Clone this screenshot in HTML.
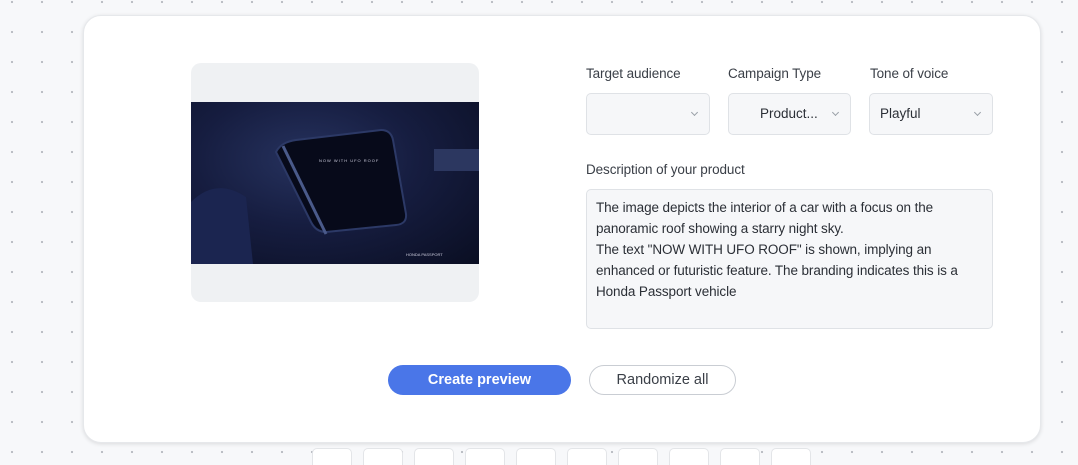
<!DOCTYPE html>
<html><head><style>
*{box-sizing:border-box;margin:0;padding:0}
html,body{width:1078px;height:465px;overflow:hidden}
body{background-color:#f7f8fa;background-image:radial-gradient(circle,#b9bcc2 1px,transparent 1.3px);background-size:30px 30px;background-position:-3px -13px;font-family:"Liberation Sans",sans-serif;color:#2b2f36;position:relative}
.card{position:absolute;left:83px;top:15px;width:958px;height:428px;background:#fff;border-radius:18px;box-shadow:0 1px 4px rgba(0,0,0,.12);border:1px solid #e6e8eb}
.imgbox{position:absolute;left:191px;top:63px;width:288px;height:239px;background:#eff1f3;border-radius:10px;overflow:hidden}
.photo{position:absolute;left:0;top:39px;width:288px;height:162px;background:radial-gradient(ellipse at 40% 35%,#26325e 0%,#161d40 45%,#0a0e22 100%)}
.lbl{position:absolute;font-size:13.5px;color:#3a3f47;letter-spacing:-0.1px}
.sel{position:absolute;top:93px;height:42px;background:#f6f7f9;border:1px solid #dfe2e6;border-radius:5px;font-size:13.5px;line-height:40px;color:#2b2f36}
.sel:after{content:"";position:absolute;right:12px;top:16px;width:4px;height:4px;border-right:1px solid #9aa0a8;border-bottom:1px solid #9aa0a8;transform:rotate(45deg)}
.ta{position:absolute;left:586px;top:189px;width:407px;height:140px;background:#f6f7f9;border:1px solid #dfe2e6;border-radius:5px;padding:7px 9px;font-size:13.5px;line-height:21px;color:#2b2f36;letter-spacing:-0.1px}
.btn1{position:absolute;left:388px;top:365px;width:183px;height:30px;border-radius:15px;background:#4a76e8;color:#fff;font-size:14.5px;font-weight:bold;text-align:center;line-height:31px}
.btn2{position:absolute;left:589px;top:365px;width:147px;height:30px;border-radius:15px;background:#fff;border:1px solid #c9cdd3;color:#3a3f47;font-size:14.5px;text-align:center;line-height:29px}
.tb{position:absolute;top:448px;width:40px;height:30px;background:#fff;border:1px solid #e3e5e8;border-radius:5px}
</style></head><body>
<div class="card"></div>
<div class="imgbox"><div class="photo">
<svg width="288" height="162" style="position:absolute;left:0;top:0">
<path d="M85,50 Q90,40 105,38 L190,28 Q200,28 202,38 L215,112 Q216,122 205,123 L135,130 Q125,130 120,120 Z" fill="#070a1a" stroke="#2c3966" stroke-width="2"/>
<line x1="92" y1="44" x2="135" y2="132" stroke="#4a5a8a" stroke-width="3"/>
<path d="M0,100 Q25,75 55,95 L62,162 L0,162Z" fill="#1b2550"/>
<rect x="243" y="47" width="45" height="22" fill="#2c3760"/>
<text x="128" y="60" font-size="4" fill="#ccd" font-family="Liberation Sans" letter-spacing="1">NOW WITH UFO ROOF</text>
<text x="215" y="154" font-size="4" fill="#ccd" font-family="Liberation Sans">HONDA  PASSPORT</text>
</svg></div></div>
<div class="lbl" style="left:586px;top:66px">Target audience</div>
<div class="lbl" style="left:728px;top:66px">Campaign Type</div>
<div class="lbl" style="left:870px;top:66px">Tone of voice</div>
<div class="sel" style="left:586px;width:124px"></div>
<div class="sel" style="left:728px;width:123px;padding-left:31px">Product...</div>
<div class="sel" style="left:869px;width:124px;padding-left:10px">Playful</div>
<div class="lbl" style="left:586px;top:162px">Description of your product</div>
<div class="ta">The image depicts the interior of a car with a focus on the panoramic roof showing a starry night sky.<br>The text "NOW WITH UFO ROOF" is shown, implying an enhanced or futuristic feature. The branding indicates this is a Honda Passport vehicle</div>
<div class="btn1">Create preview</div>
<div class="btn2">Randomize all</div>
<div class="tb" style="left:312px"></div><div class="tb" style="left:363px"></div><div class="tb" style="left:414px"></div><div class="tb" style="left:465px"></div><div class="tb" style="left:516px"></div><div class="tb" style="left:567px"></div><div class="tb" style="left:618px"></div><div class="tb" style="left:669px"></div><div class="tb" style="left:720px"></div><div class="tb" style="left:771px"></div>
</body></html>
